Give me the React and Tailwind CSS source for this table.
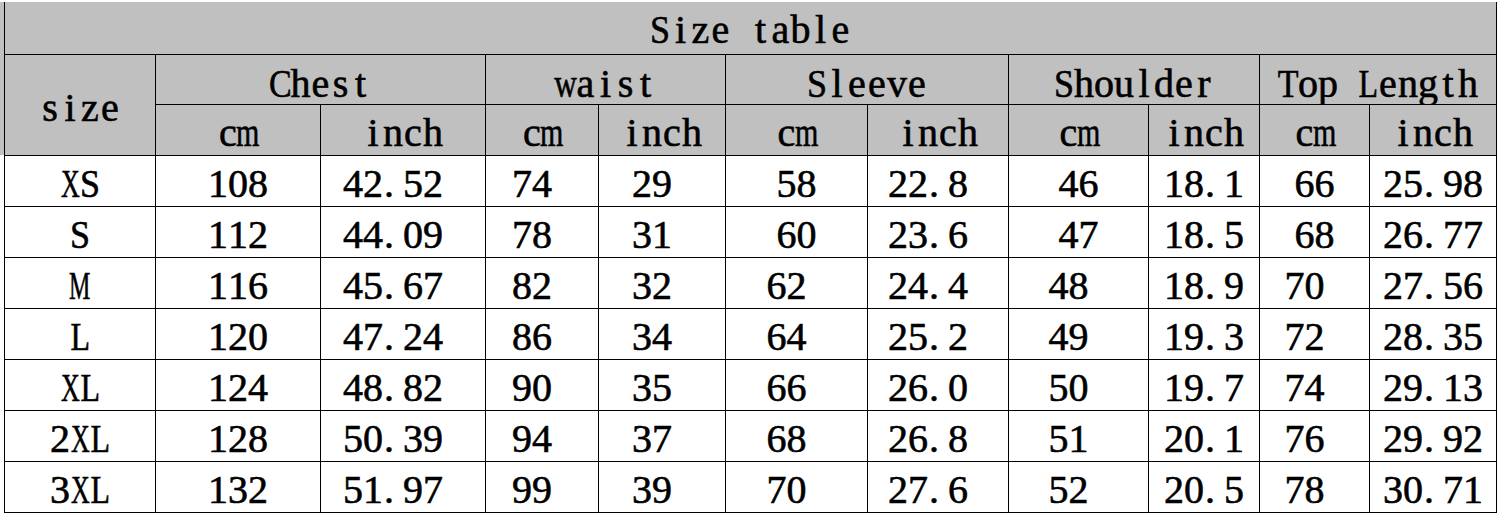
import React from "react";

const SCALE = {
  X: "scale-x-[0.65]",
  M: "scale-x-[0.6]",
  m: "scale-x-[0.75]",
  w: "scale-x-[0.78]",
  L: "scale-x-[0.8]",
  C: "scale-x-[0.85]",
  T: "scale-x-[0.85]",
  S: "scale-x-[0.9]",
};

function Mono({ s }) {
  return (
    <span className="inline-flex [font-family:'Liberation_Serif','Times_New_Roman',serif] [-webkit-text-stroke:0.6px_black]">
      {[...s].map((c, i) => (
        <span
          key={i}
          className={
            c === "."
              ? "inline-flex w-[20px] justify-start pl-[1px]"
              : "inline-flex w-[20px] justify-center"
          }
        >
          <span className={"inline-block " + (SCALE[c] || "")}>
            {c === " " ? "\u00a0" : c}
          </span>
        </span>
      ))}
    </span>
  );
}

const rows = [
  ["XS", "108", "42.52 ", "74 ", "29 ", "58", "22.8 ", "46", "18.1", "66", "25.98"],
  ["S", "112", "44.09 ", "78 ", "31 ", "60", "23.6 ", "47", "18.5", "68", "26.77"],
  ["M", "116", "45.67 ", "82 ", "32 ", "62 ", "24.4 ", "48 ", "18.9", "70 ", "27.56"],
  ["L", "120", "47.24 ", "86 ", "34 ", "64 ", "25.2 ", "49 ", "19.3", "72 ", "28.35"],
  ["XL", "124", "48.82 ", "90 ", "35 ", "66 ", "26.0 ", "50 ", "19.7", "74 ", "29.13"],
  ["2XL", "128", "50.39 ", "94 ", "37 ", "68 ", "26.8 ", "51 ", "20.1", "76 ", "29.92"],
  ["3XL", "132", "51.97 ", "99 ", "39 ", "70 ", "27.6 ", "52 ", "20.5", "78 ", "30.71"],
];

const groups = ["Chest", "waist", "Sleeve", "Shoulder", "Top Length"];

const cell = "flex justify-center items-start border-r border-b border-black";

export default function App() {
  return (
    <div className="w-[1500px] h-[515px] bg-white pt-[2px] flex font-serif text-[40px] leading-[40px] text-black">
      <div className="w-[4px] flex flex-col">
        <div className="h-[153px] bg-[#c0c0c0]" />
      </div>
      <div className="grid grid-cols-[151px_165px_165px_113px_127px_142px_141px_140px_111px_110px_127px] grid-rows-[53px_50px_51px_repeat(7,51px)] border-l border-black h-[511px]">
        <div className={cell + " col-span-11 bg-[#c0c0c0] pt-[8px]"}>
          <Mono s="Size table" />
        </div>
        <div className={cell + " row-span-2 bg-[#c0c0c0] pt-[33px]"}>
          <Mono s="size" />
        </div>
        {groups.map((g) => (
          <div key={g} className={cell + " col-span-2 bg-[#c0c0c0] pt-[9px]"}>
            <Mono s={g} />
          </div>
        ))}
        {groups.map((g) => (
          <React.Fragment key={g + "u"}>
            <div className={cell + " bg-[#c0c0c0] pt-[8px]"}>
              <Mono s="cm" />
            </div>
            <div className={cell + " bg-[#c0c0c0] pt-[8px]"}>
              <Mono s="inch" />
            </div>
          </React.Fragment>
        ))}
        {rows.map((r) =>
          r.map((v, j) => (
            <div key={r[0] + j} className={cell + " bg-white pt-[8px]"}>
              <Mono s={v} />
            </div>
          ))
        )}
      </div>
    </div>
  );
}
